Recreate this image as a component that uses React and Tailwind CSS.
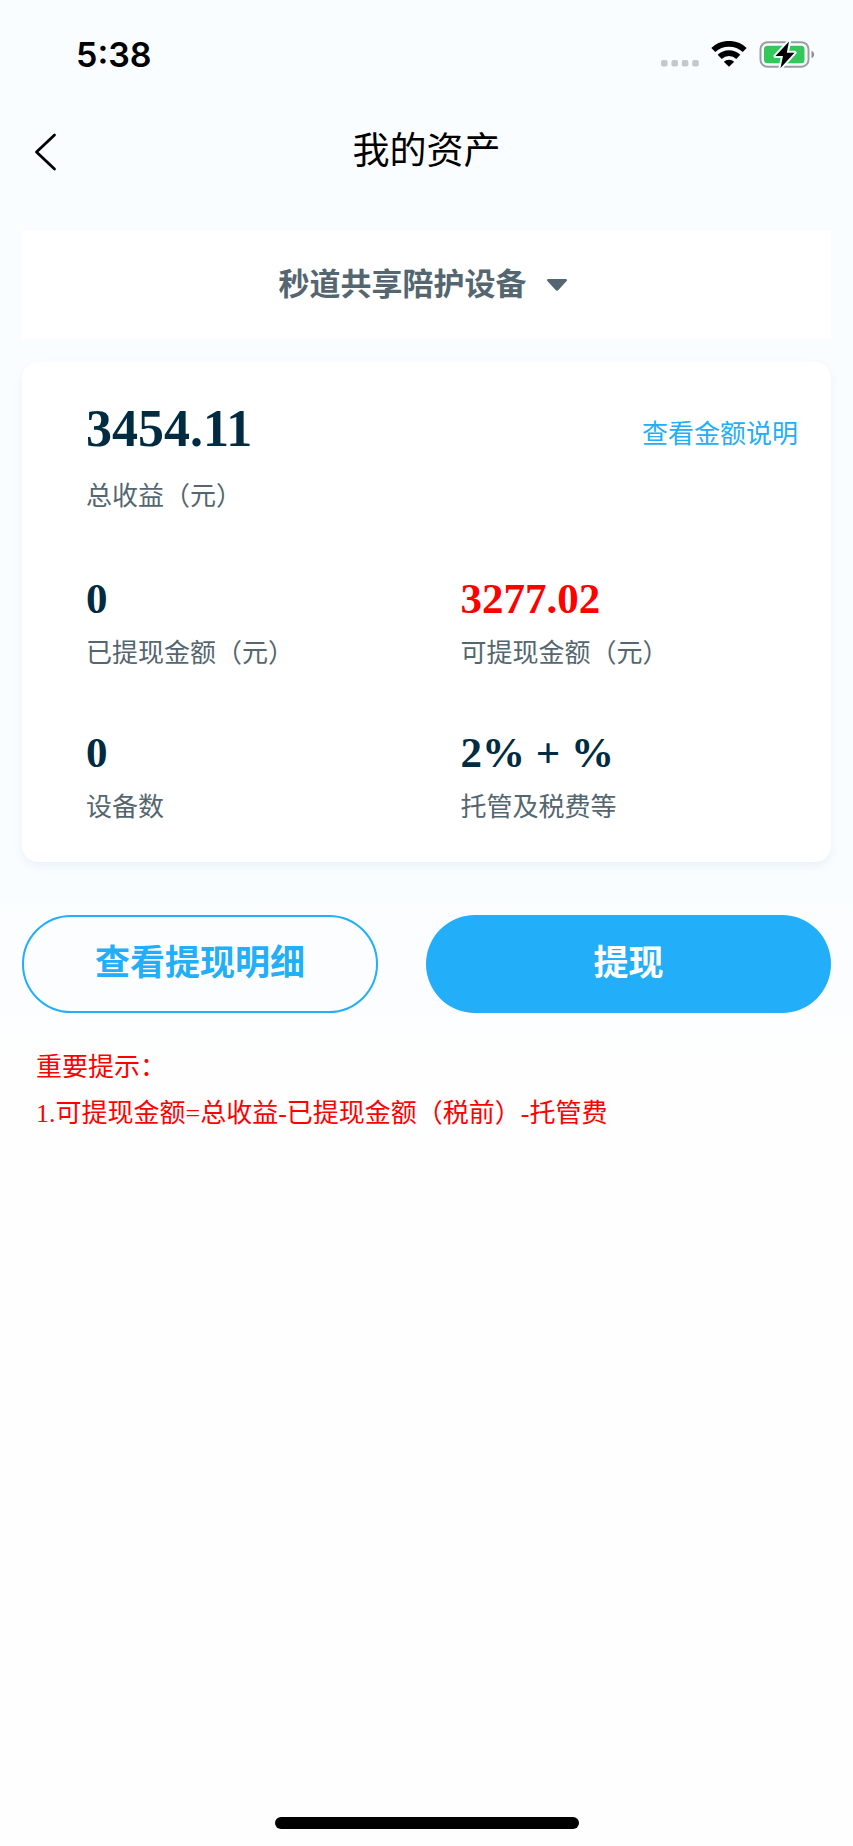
import { useState } from "react";

const dispositivos = ["秒道共享陪护设备"];

const resumo = [
  { valor: "0", rotulo: "已提现金额（元）" },
  { valor: "3277.02", rotulo: "可提现金额（元）", destaque: true },
  { valor: "0", rotulo: "设备数" },
  { valor: "2% + %", rotulo: "托管及税费等" },
];

function StatusBar() {
  return (
    <div className="flex h-[110px] items-center justify-between pl-[76px] pr-[38px]">
      <span className="font-['Inter',sans-serif] text-[34px] font-semibold leading-10 text-black">
        5:38
      </span>
      <div className="flex items-center gap-3">
        <svg className="h-7 w-[38px]" viewBox="0 0 38 28" fill="#c5c8cb">
          <rect x="0" y="19" width="6.600" height="6.600" rx="2" />
          <rect x="10.400" y="19" width="6.600" height="6.600" rx="2" />
          <rect x="20.800" y="19" width="6.600" height="6.600" rx="2" />
          <rect x="31.200" y="19" width="6.600" height="6.600" rx="2" />
        </svg>
        <svg className="h-7 w-9" viewBox="0 0 36 28">
          <g fill="none" stroke="#000" strokeWidth="5.800">
            <path d="M2.300 9a23 23 0 0 1 31.400 0" />
            <path d="M8.700 15.800a13.500 13.500 0 0 1 18.600 0" />
          </g>
          <path d="M18 25.800l-5.200-5a7.400 7.400 0 0 1 10.400 0z" />
        </svg>
        <svg className="h-7 w-14" viewBox="0 0 56 28">
          <rect x="1.500" y="1.200" width="48" height="24.500" rx="7" fill="none" stroke="#9c9fa1" strokeWidth="2" />
          <rect x="5" y="4.700" width="40.500" height="17.500" rx="3.500" fill="#34c759" />
          <path d="M52.500 9.700c3.500 1.500 3.500 6 0 7.500z" fill="#8d9092" />
          <path
            d="M30 .500L16.500 15h7.500L21.500 27 35.500 11.700h-7.700z"
            fill="#000"
            stroke="#fafdff"
            strokeWidth="4"
            strokeLinejoin="round"
            paintOrder="stroke"
          />
        </svg>
      </div>
    </div>
  );
}

export default function MeusAtivos() {
  const [dispositivo, setDispositivo] = useState(dispositivos[0]);

  return (
    <div
      lang="zh-CN"
      className="flex min-h-screen flex-col bg-[#fefefe] bg-[linear-gradient(#fafdff_900px,#fefefe_1080px)] font-['Liberation_Serif','Noto_Sans_CJK_SC',serif]"
    >
      <StatusBar />

      {/* Cabeçalho */}
      <header className="grid h-[84px] grid-cols-[1fr_auto_1fr] items-center px-8">
        <button type="button" aria-label="返回" className="justify-self-start">
          <svg className="h-10 w-7" viewBox="0 0 28 40" fill="none" stroke="#000" strokeWidth="2.800" strokeLinecap="round" strokeLinejoin="round">
            <path d="M22.500 3L4.500 20l18 17" />
          </svg>
        </button>
        <h1 className="text-[37px] leading-[54px] text-black">我的资产</h1>
      </header>

      <main className="px-[22px] pt-[37px]">
        {/* Seleção do dispositivo */}
        <div className="flex h-[108px] items-center justify-center gap-4 bg-white text-[#54666f]">
          <select
            aria-label="设备"
            value={dispositivo}
            onChange={(e) => setDispositivo(e.target.value)}
            className="h-16 appearance-none px-1 text-[31px] font-bold leading-[56px]"
          >
            {dispositivos.map((nome) => (
              <option key={nome}>{nome}</option>
            ))}
          </select>
          <svg className="mr-3 h-3 w-5" viewBox="0 0 20 12" fill="currentColor">
            <path d="M1.200 0h17.600c1.200 0 1.600 1.200 .8 2l-8.200 9c-.8 .9-2 .9-2.800 0L.4 2C-.4 1.200 0 0 1.200 0z" />
          </svg>
        </div>

        {/* Resumo dos valores */}
        <section className="mt-[23px] rounded-2xl bg-white pb-[34px] pl-16 pt-[35px] shadow-[0_4px_8px_rgba(90,140,210,0.1)]">
          <div className="flex items-start justify-between pr-[33px]">
            <div>
              <p className="text-[52px] font-bold leading-[64px] text-[#002b41]">3454.11</p>
              <p className="mt-4 text-[26px] leading-10 text-[#54666f]">总收益（元）</p>
            </div>
            <a href="#" className="mt-[18px] text-[26px] leading-10 text-[#22aef9]">查看金额说明</a>
          </div>
          <dl className="mt-[53px] grid grid-cols-2 gap-x-1 gap-y-[50px]">
            {resumo.map((item) => (
              <div key={item.rotulo} className="flex flex-col-reverse gap-[6px]">
                <dt className="text-[26px] leading-10 text-[#54666f]">{item.rotulo}</dt>
                <dd
                  className={`text-[43px] font-bold leading-[58px] ${
                    item.destaque ? "text-[#ff0000]" : "text-[#002b41]"
                  }`}
                >
                  {item.valor}
                </dd>
              </div>
            ))}
          </dl>
        </section>

        <div className="mt-[53px] grid grid-cols-[356fr_405fr] gap-12">
          <button
            type="button"
            className="h-[98px] rounded-full border-2 border-[#22aef9] text-[35px] font-bold text-[#22aef9]"
          >
            查看提现明细
          </button>
          <button type="button" className="h-[98px] rounded-full bg-[#22aef9] text-[35px] font-bold text-white">
            提现
          </button>
        </div>

        <div className="mt-8 px-[14px] text-[26px] leading-[46px] text-[#ff0000]">
          <p>重要提示：</p>
          <p>1.可提现金额=总收益-已提现金额（税前）-托管费</p>
        </div>
      </main>

      <div className="mx-auto mb-[17px] mt-auto h-3 w-[304px] rounded-full bg-black" />
    </div>
  );
}
